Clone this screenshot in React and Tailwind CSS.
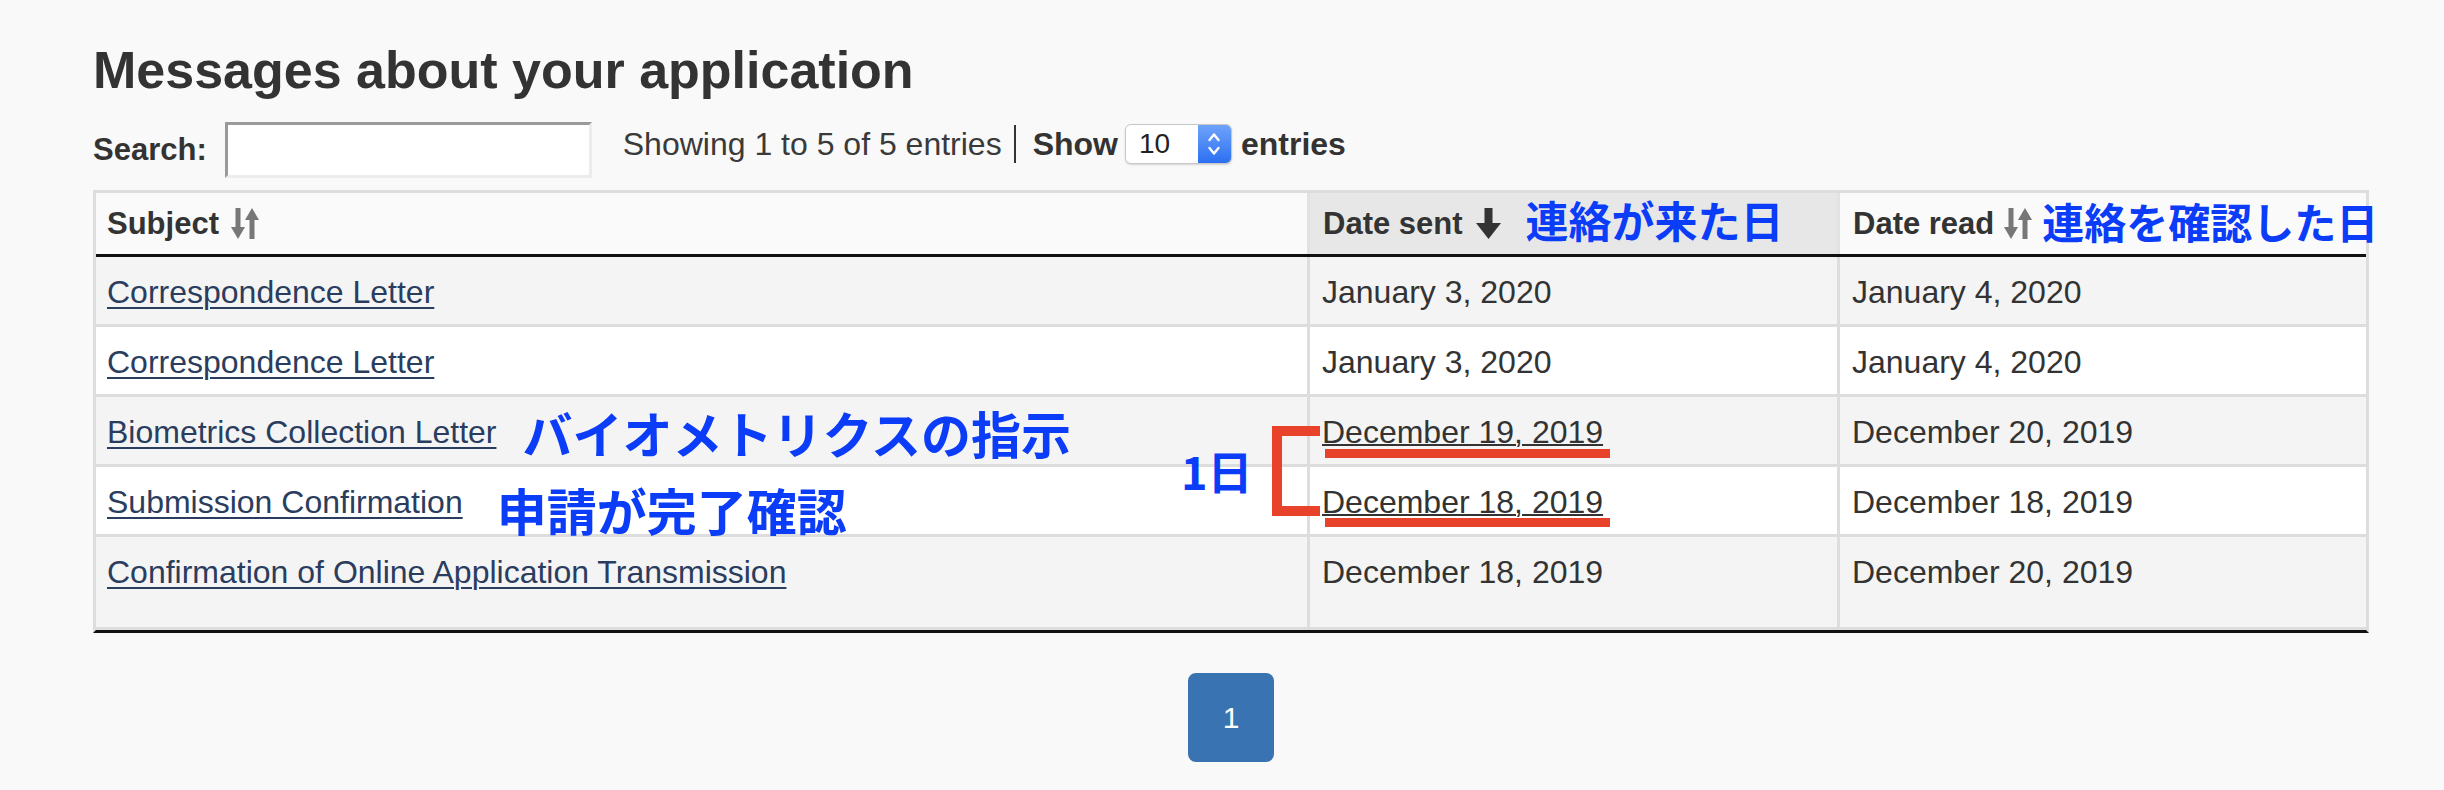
const rows = [
  { s: "Correspondence Letter", sent: "January 3, 2020", read: "January 4, 2020" },
  { s: "Correspondence Letter", sent: "January 3, 2020", read: "January 4, 2020" },
  { s: "Biometrics Collection Letter", sent: "December 19, 2019", read: "December 20, 2019", note: "バイオメトリクスの指示", noteCls: "ml-[26px] mt-0", u: true },
  { s: "Submission Confirmation", sent: "December 18, 2019", read: "December 18, 2019", note: "申請が完了確認", noteCls: "ml-[34px] mt-[7px]", u: true },
  { s: "Confirmation of Online Application Transmission", sent: "December 18, 2019", read: "December 20, 2019", tall: true },
];

const SortBoth = () => (
  <svg width="28" height="31" viewBox="0 0 28 31" fill="#777">
    <rect x="4.5" y="0" width="5" height="21" />
    <polygon points="0,19 14,19 7,31" />
    <rect x="18.5" y="10" width="5" height="21" />
    <polygon points="14,12 28,12 21,0" />
  </svg>
);

const SortDown = () => (
  <svg width="25" height="31" viewBox="0 0 25 31" fill="#333">
    <rect x="8.5" y="0" width="8" height="17" />
    <polygon points="0,15 25,15 12.5,31" />
  </svg>
);

const JP = "font-['Noto_Sans_CJK_JP',sans-serif] font-bold text-[#0b3cf7]";

export default function App() {
  return (
    <div className="min-h-screen w-full bg-[#f9f9f9] pl-[93px] pt-[40px] pb-[20px] text-[#333] font-['Liberation_Sans','Noto_Sans_CJK_JP',sans-serif]">
      <h2 className="text-[52px] font-bold leading-[60px] text-[#333]">Messages about your application</h2>

      <div className="mt-[22px] flex items-start">
        <div className="flex h-[56px] items-center">
          <span className="text-[31px] font-bold leading-[36px]">Search:</span>
          <input
            type="text"
            className="ml-[18px] h-[56px] w-[367px] border-[3px] border-t-[#9a9a9a] border-l-[#9a9a9a] border-b-[#ececec] border-r-[#ececec] bg-white outline-none"
          />
        </div>
        <div className="ml-[31px] mt-px flex h-[42px] items-center">
          <span className="text-[32px] leading-none text-[#3a3a3a]">Showing 1 to 5 of 5 entries</span>
          <span className="ml-[12px] h-[38px] w-[2px] bg-[#333]" />
          <span className="ml-[17px] text-[32px] font-bold leading-none">Show</span>
          <div className="ml-[7px] flex h-[40px] w-[107px] overflow-hidden rounded-[6px] border border-[#c8c8c8] bg-white shadow-[0_1px_2px_rgba(0,0,0,0.15)]">
            <div className="flex flex-1 items-center pl-[13px] text-[28px] leading-none text-[#222]">10</div>
            <div className="flex w-[33px] items-center justify-center bg-linear-to-b from-[#6ea3fa] to-[#2b6ff2]">
              <svg width="14" height="28" viewBox="0 0 14 28" fill="none" stroke="white" strokeWidth="2.4" strokeLinecap="round" strokeLinejoin="round">
                <polyline points="2.5,10 7,4.5 11.5,10" />
                <polyline points="2.5,18 7,23.5 11.5,18" />
              </svg>
            </div>
          </div>
          <span className="ml-[9px] text-[32px] font-bold leading-none">entries</span>
        </div>
      </div>

      <div className="relative mt-[12px] w-[2276px] border-x-[3px] border-t-[3px] border-[#ddd] border-b-[3px] border-b-[#111]">
        <div className="grid h-[64px] grid-cols-[1214px_530px_526px] border-b-[3px] border-b-[#111] bg-[#fafafa]">
          <div className="flex items-center border-r-[3px] border-r-[#e2e2e2] pl-[11px]">
            <span className="text-[31px] font-bold leading-none">Subject</span>
            <span className="ml-[12px] flex"><SortBoth /></span>
          </div>
          <div className="flex items-center border-r-[3px] border-r-[#e2e2e2] bg-[#e7e7e7] pl-[13px]">
            <span className="text-[31px] font-bold leading-none">Date sent</span>
            <span className="ml-[13px] flex"><SortDown /></span>
            <span className={`ml-[25px] mb-[8px] text-[43px] leading-none ${JP}`}>連絡が来た日</span>
          </div>
          <div className="flex items-center pl-[13px] whitespace-nowrap">
            <span className="text-[31px] font-bold leading-none">Date read</span>
            <span className="ml-[10px] flex"><SortBoth /></span>
            <span className={`ml-[10px] mb-[6px] text-[42px] leading-none ${JP}`}>連絡を確認した日</span>
          </div>
        </div>

        {rows.map((r, i) => (
          <div
            key={i}
            className={`grid grid-cols-[1214px_530px_526px] border-b-[3px] border-b-[#ddd] ${r.tall ? "h-[93px]" : "h-[70px]"} ${i % 2 === 0 ? "bg-[#f4f4f4]" : "bg-white"}`}
          >
            <div className="flex items-start border-r-[3px] border-r-[#ddd] pl-[11px] pt-[13px] whitespace-nowrap">
              <a href="#" className="text-[32px] leading-[44px] text-[#2a3d5e] underline decoration-[2px] underline-offset-[4px]">
                {r.s}
              </a>
              {r.note && <span className={`${r.noteCls} text-[50px] leading-[44px] ${JP}`}>{r.note}</span>}
            </div>
            <div className="border-r-[3px] border-r-[#ddd] pl-[12px] pt-[13px]">
              <span className={`text-[32px] leading-[44px] text-[#333] ${r.u ? "underline decoration-[1.5px] underline-offset-[1px]" : ""}`}>
                {r.sent}
              </span>
            </div>
            <div className="pl-[12px] pt-[13px]">
              <span className="text-[32px] leading-[44px] text-[#333]">{r.read}</span>
            </div>
          </div>
        ))}

        <span className={`absolute left-[1085px] top-[255px] text-[45px] leading-none ${JP}`}>1日</span>
        <div className="absolute left-[1176px] top-[233px] h-[90px] w-[48px] border-y-[10px] border-l-[10px] border-[#e9422b]" />
        <div className="absolute left-[1229px] top-[256px] h-[9px] w-[285px] bg-[#e9422b]" />
        <div className="absolute left-[1229px] top-[325px] h-[9px] w-[285px] bg-[#e9422b]" />
      </div>

      <div className="mt-[40px] flex w-[2276px] justify-center">
        <div className="flex h-[89px] w-[86px] items-center justify-center rounded-[8px] bg-[#3a73b1] text-[30px] leading-none text-white">
          1
        </div>
      </div>
    </div>
  );
}
